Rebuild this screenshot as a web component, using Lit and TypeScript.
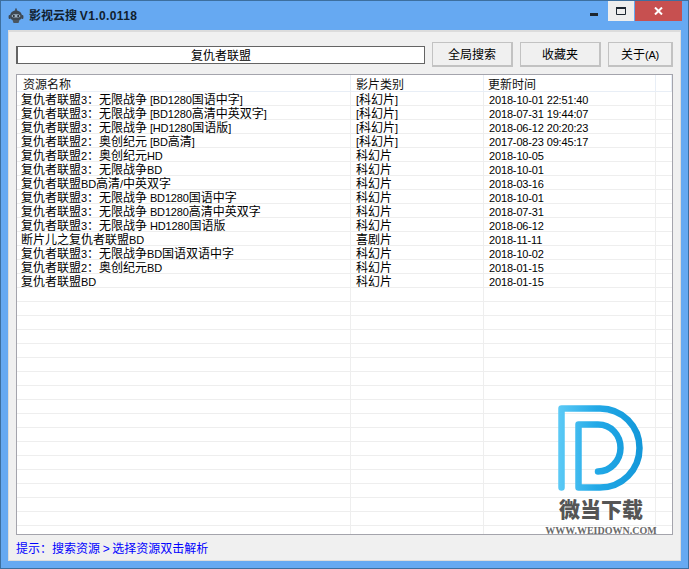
import { LitElement, html, css } from "lit";
import { customElement } from "lit/decorators.js";

const ROWS: [string, string, string][] = [
  ["复仇者联盟3：无限战争 [BD1280国语中字]", "[科幻片]", "2018-10-01 22:51:40"],
  ["复仇者联盟3：无限战争 [BD1280高清中英双字]", "[科幻片]", "2018-07-31 19:44:07"],
  ["复仇者联盟3：无限战争 [HD1280国语版]", "[科幻片]", "2018-06-12 20:20:23"],
  ["复仇者联盟2：奥创纪元 [BD高清]", "[科幻片]", "2017-08-23 09:45:17"],
  ["复仇者联盟2：奥创纪元HD", "科幻片", "2018-10-05"],
  ["复仇者联盟3：无限战争BD", "科幻片", "2018-10-01"],
  ["复仇者联盟BD高清/中英双字", "科幻片", "2018-03-16"],
  ["复仇者联盟3：无限战争 BD1280国语中字", "科幻片", "2018-10-01"],
  ["复仇者联盟3：无限战争 BD1280高清中英双字", "科幻片", "2018-07-31"],
  ["复仇者联盟3：无限战争 HD1280国语版", "科幻片", "2018-06-12"],
  ["断片儿之复仇者联盟BD", "喜剧片", "2018-11-11"],
  ["复仇者联盟3：无限战争BD国语双语中字", "科幻片", "2018-10-02"],
  ["复仇者联盟2：奥创纪元BD", "科幻片", "2018-01-15"],
  ["复仇者联盟BD", "科幻片", "2018-01-15"],
];
const EMPTY = 18;

function mixed(text: string) {
  return text.split(/([\x20-\x7e]+)/).filter(Boolean).map((p) =>
    /^[\x20-\x7e]+$/.test(p) ? html`<span class="lat">${p}</span>` : p
  );
}

@customElement("app-root")
export class AppRoot extends LitElement {
  static styles = css`
    :host {
      display: block;
      width: 689px;
      height: 569px;
      overflow: hidden;
      font-family: "Noto Sans CJK SC", "Liberation Sans", sans-serif;
      font-size: 12px;
      color: #000;
    }
    .lat { font-family: "Liberation Sans", sans-serif; font-size: 11px; letter-spacing: -0.15px; }
    .window {
      box-sizing: border-box;
      width: 689px;
      height: 569px;
      display: flex;
      flex-direction: column;
      background: #66a9f2;
      border: 1px solid #3d6f9f;
    }
    .titlebar { height: 29px; display: flex; align-items: flex-start; flex: none; }
    .appicon { margin: 7px 0 0 7px; flex: none; }
    .title {
      margin: 5px 0 0 5px;
      font-weight: 700;
      line-height: 17px;
      color: #10202e;
      font-size: 12px;
    }
    .title span { font-family: "Liberation Sans", sans-serif; font-size: 12px; letter-spacing: 0.4px; }
    .spacer { flex: 1; }
    .wbtns { display: flex; gap: 1px; margin-right: 6px; }
    .wbtn { height: 20px; display: flex; align-items: center; justify-content: center; }
    .min { width: 26px; }
    .min svg { margin-top: 7px; }
    .max { width: 26px; background: #eeeeee; }
    .close { width: 47px; background: #c75050; }
    .client {
      flex: 1;
      margin: 0 7px 7px 7px;
      background: #f0f0f0;
      border-top: 2px solid #dcdcdc;
      border-left: 1px solid #dcdcdc;
      border-right: 1px solid #dcdcdc;
      border-bottom: 1px solid #dcdcdc;
      display: flex;
      flex-direction: column;
      padding: 0 7px;
      min-height: 0;
    }
    .toolbar { display: flex; align-items: flex-start; height: 25px; margin-top: 10px; flex: none; }
    .search {
      box-sizing: border-box;
      width: 409px;
      height: 18px;
      margin-top: 4px;
      background: #fff;
      border: 1px solid #646464;
      border-left-width: 2px;
      text-align: center;
      line-height: 16px;
      flex: none;
    }
    .btn {
      box-sizing: border-box;
      height: 25px;
      line-height: 22px;
      text-align: center;
      background: #f0f0f0;
      border: 1px solid #c2c2c2;
      border-right-width: 2px;
      border-bottom-width: 2px;
      flex: none;
    }
    .b1 { width: 81px; margin-left: 7px; }
    .b2 { width: 81px; margin-left: 7px; }
    .b3 { width: 65px; margin-left: 7px; }
    .list {
      position: relative;
      margin-top: 7px;
      flex: none;
      height: 461px;
      box-sizing: border-box;
      background: #fff;
      border: 1px solid #a4a4ac;
    }
    .rows { height: 459px; overflow: hidden; }
    .row {
      display: grid;
      grid-template-columns: 334px 133px 172px 1fr;
      height: 14px;
      line-height: 14px;
      box-sizing: border-box;
    }
    .row > div {
      box-sizing: border-box;
      height: 14px;
      border-right: 1px solid #eeeeee;
      border-bottom: 1px solid #eeeeee;
      white-space: nowrap;
      padding-left: 5px;
      line-height: 14px;
    }
    .row > div:first-child { padding-left: 4px; }
    .row > div:last-child { border-right: none; }
    .head { height: 17px; }
    .row.head > div {
      height: 17px;
      line-height: 17px;
      border-right: 1px solid #e8eef6;
      border-bottom: 1px solid #e8eef6;
      color: #111;
    }
    .row.head > div:first-child { padding-left: 6px; }
    .row.head > div:nth-child(3) { padding-left: 4px; }
    .logo {
      position: absolute;
      right: 0;
      bottom: 0;
      width: 117px;
      height: 135px;
    }
    .logo svg { position: absolute; left: 0; top: 0; }
    .brand {
      position: absolute;
      left: -2px;
      top: 96px;
      width: 96px;
      text-align: center;
      font-size: 21px;
      line-height: 26px;
      font-weight: 900;
      color: #555555;
      white-space: nowrap;
    }
    .url {
      position: absolute;
      left: -14px;
      top: 126px;
      width: 120px;
      text-align: center;
      font-family: "Liberation Serif", serif;
      font-size: 10px;
      line-height: 12px;
      font-weight: 700;
      color: #6a6a6a;
      white-space: nowrap;
    }
    .status {
      flex: 1;
      color: #0000ff;
      line-height: 16px;
      padding-top: 5px;
    }
    .status .lat { font-size: 12px; }
  `;

  render() {
    const empties = Array.from({ length: EMPTY });
    return html`
      <div class="window">
        <div class="titlebar">
          <svg class="appicon" width="16" height="16" viewBox="0 0 16 16">
            <path d="M8 0.5v2.5" stroke="#3e4852" stroke-width="1.6" fill="none"/>
            <path d="M2 8.5C2 4.8 4.6 2.5 8 2.5S14 4.8 14 8.5C14 11 12 12.5 8 12.5S2 11 2 8.5Z" fill="#3e4852"/>
            <rect x="0.6" y="7" width="2" height="4" rx="1" fill="#3e4852"/>
            <rect x="13.4" y="7" width="2" height="4" rx="1" fill="#3e4852"/>
            <path d="M3.6 8c0-1.2 1.6-1.8 4.4-1.8S12.400 6.800 12.400 8 10.800 9.600 8 9.600 3.600 9.200 3.600 8Z" fill="#9fb2c4"/>
            <circle cx="5.800" cy="8" r="1" fill="#1f262d"/>
            <circle cx="10.200" cy="8" r="1" fill="#1f262d"/>
            <path d="M4.500 12h7l-1 3h-5z" fill="#4a5560"/>
          </svg>
          <div class="title">影视云搜 <span>V1.0.0118</span></div>
          <div class="spacer"></div>
          <div class="wbtns">
            <div class="wbtn min">
              <svg width="8" height="3" viewBox="0 0 8 3"><rect width="8" height="3" fill="#1d2630"/></svg>
            </div>
            <div class="wbtn max">
              <svg width="10" height="8" viewBox="0 0 10 8"><path d="M.5.500h9v7h-9z" fill="none" stroke="#1d2630"/><rect width="10" height="2" fill="#1d2630"/></svg>
            </div>
            <div class="wbtn close">
              <svg width="9" height="8" viewBox="0 0 9 8"><path d="M1 .5l7 7M8 .5l-7 7" stroke="#fff" stroke-width="2" fill="none"/></svg>
            </div>
          </div>
        </div>
        <div class="client">
          <div class="toolbar">
            <div class="search">复仇者联盟</div>
            <div class="btn b1">全局搜索</div>
            <div class="btn b2">收藏夹</div>
            <div class="btn b3">关于<span class="lat">(A)</span></div>
          </div>
          <div class="list">
            <div class="rows">
              <div class="row head">
                <div>资源名称</div><div>影片类别</div><div>更新时间</div><div></div>
              </div>
              ${ROWS.map((r) => html`
                <div class="row">
                  <div>${mixed(r[0])}</div><div>${mixed(r[1])}</div><div>${mixed(r[2])}</div><div></div>
                </div>`)}
              ${empties.map(() => html`<div class="row"><div></div><div></div><div></div><div></div></div>`)}
            </div>
            <div class="logo">
              <svg width="96" height="92" viewBox="0 0 96 92">
                <defs>
                  <linearGradient id="g" gradientUnits="userSpaceOnUse" x1="3" y1="0" x2="88" y2="0">
                    <stop offset="0" stop-color="#5ccaf6"/>
                    <stop offset="0.45" stop-color="#22a9e7"/>
                    <stop offset="1" stop-color="#1397d9"/>
                  </linearGradient>
                </defs>
                <path d="M6.500 88.500V9.500H45C67 9.500 84.500 27 84.500 49S67 88.500 45 88.500H23.500V25.500H43C56 25.500 65.500 36 65.500 49C65.500 62 55 72.500 43 72.500"
                  fill="none" stroke="url(#g)" stroke-width="6.500" stroke-linecap="round" stroke-linejoin="round"/>
              </svg>
              <div class="brand">微当下载</div>
              <div class="url">WWW.WEIDOWN.COM</div>
            </div>
          </div>
          <div class="status">提示：搜索资源 <span class="lat">&gt;</span> 选择资源双击解析</div>
        </div>
      </div>
    `;
  }
}
